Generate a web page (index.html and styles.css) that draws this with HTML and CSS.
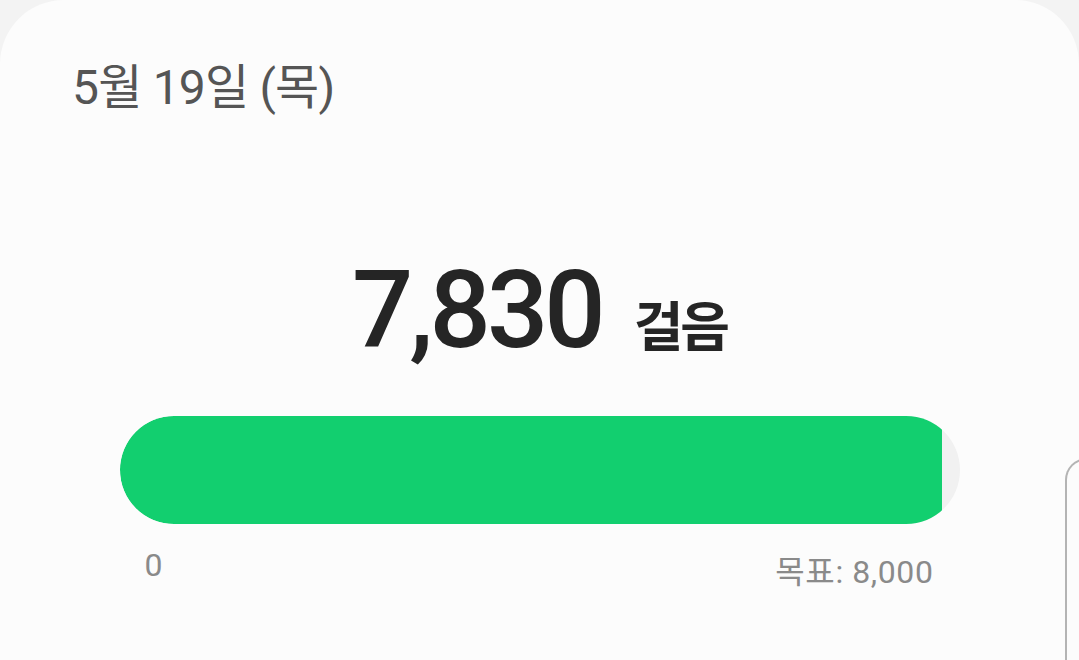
FILE: index.html
```html
<!DOCTYPE html>
<html lang="ko">
<head>
    <meta charset="UTF-8">
    <meta name="viewport" content="width=device-width, initial-scale=1.0">
    <title>걸음 수</title>
    <link rel="stylesheet" href="styles.css">
</head>
<body>
    <div class="card">
        <div class="date">5월 19일 (목)</div>

        <div class="count">
            <span class="count-number">7,830</span>
            <span class="count-unit">걸음</span>
        </div>

        <div class="progress">
            <div class="progress-track">
                <div class="progress-fill" style="width: 97.875%;"></div>
            </div>
            <div class="progress-labels">
                <span>0</span>
                <span>목표: 8,000</span>
            </div>
        </div>
    </div>

    <!-- next card peeking in from the right -->
    <div class="side-card"></div>
</body>
</html>
```

FILE: styles.css
```css
body {
    margin: 0;
    padding: 0;
    background-color: #f3f3f3;
    font-family: Roboto, "Noto Sans CJK KR", sans-serif;
    height: 660px;
    overflow: hidden;
    position: relative;
}

.card {
    background-color: #fcfcfc;
    border-radius: 64px 64px 0 0;
    height: 660px;
    box-sizing: border-box;
    padding-top: 58px;
}

.date {
    padding-left: 72px;
    font-size: 48px;
    line-height: 60px;
    letter-spacing: -0.8px;
    color: #555555;
}

.count {
    display: flex;
    justify-content: center;
    align-items: baseline;
    gap: 32px;
    margin-top: 138px;
    color: #252525;
}

.count-number {
    font-size: 108px;
    font-weight: 500;
    line-height: 108px;
    letter-spacing: -4px;
}

.count-unit {
    font-family: "Noto Sans CJK KR", sans-serif;
    font-size: 54px;
    font-weight: 700;
    letter-spacing: -3px;
}

.progress {
    width: 840px;
    margin: 52px auto 0;
}

.progress-track {
    height: 108px;
    border-radius: 54px;
    background-color: #f1f1f1;
    overflow: hidden;
}

.progress-fill {
    height: 100%;
    background-color: #12cf6f;
    border-radius: 54px 0 0 54px;
}

.progress-labels {
    display: flex;
    justify-content: space-between;
    padding: 22px 26px 0 25px;
    font-size: 32px;
    letter-spacing: 0.6px;
    color: #8a8a8a;
}

.side-card {
    position: absolute;
    left: 1065px;
    top: 458px;
    width: 60px;
    height: 200px;
    border: 2px solid #b4b4b4;
    border-bottom: none;
    border-radius: 22px 0 0 0;
    background-color: #fcfcfc;
}
```
